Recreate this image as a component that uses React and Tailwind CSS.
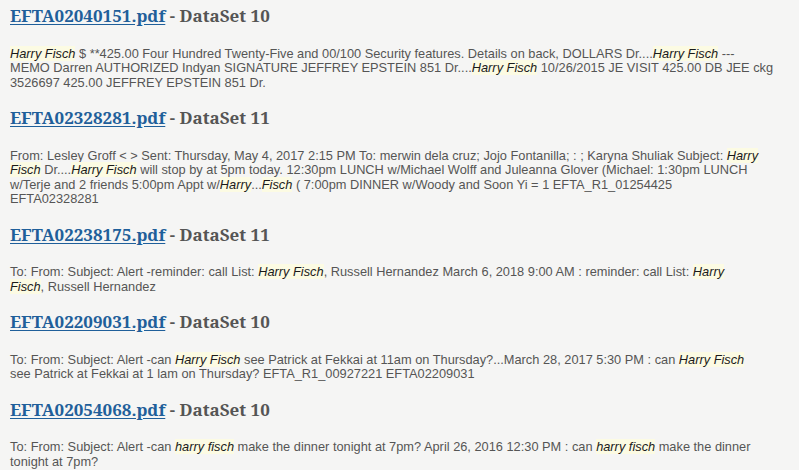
// each snippet is a list of lines; a line is a list of parts (string or { hl })
const results = [
  {
    file: "EFTA02040151.pdf",
    set: "DataSet 10",
    lines: [
      [
        { hl: "Harry Fisch" },
        " $ **425.00 Four Hundred Twenty-Five and 00/100 Security features. Details on back, DOLLARS Dr....",
        { hl: "Harry Fisch" },
        " ---",
      ],
      [
        "MEMO Darren AUTHORIZED Indyan SIGNATURE JEFFREY EPSTEIN 851 Dr....",
        { hl: "Harry Fisch" },
        " 10/26/2015 JE VISIT 425.00 DB JEE ckg",
      ],
      ["3526697 425.00 JEFFREY EPSTEIN 851 Dr."],
    ],
  },
  {
    file: "EFTA02328281.pdf",
    set: "DataSet 11",
    lines: [
      [
        "From: Lesley Groff < > Sent: Thursday, May 4, 2017 2:15 PM To: merwin dela cruz; Jojo Fontanilla; : ; Karyna Shuliak Subject: ",
        { hl: "Harry" },
      ],
      [
        { hl: "Fisch" },
        " Dr....",
        { hl: "Harry Fisch" },
        " will stop by at 5pm today. 12:30pm LUNCH w/Michael Wolff and Juleanna Glover (Michael: 1:30pm LUNCH",
      ],
      [
        "w/Terje and 2 friends 5:00pm Appt w/",
        { hl: "Harry" },
        "...",
        { hl: "Fisch" },
        " ( 7:00pm DINNER w/Woody and Soon Yi = 1 EFTA_R1_01254425",
      ],
      ["EFTA02328281"],
    ],
  },
  {
    file: "EFTA02238175.pdf",
    set: "DataSet 11",
    lines: [
      [
        "To: From: Subject: Alert -reminder: call List: ",
        { hl: "Harry Fisch" },
        ", Russell Hernandez March 6, 2018 9:00 AM : reminder: call List: ",
        { hl: "Harry" },
      ],
      [{ hl: "Fisch" }, ", Russell Hernandez"],
    ],
  },
  {
    file: "EFTA02209031.pdf",
    set: "DataSet 10",
    lines: [
      [
        "To: From: Subject: Alert -can ",
        { hl: "Harry Fisch" },
        " see Patrick at Fekkai at 11am on Thursday?...March 28, 2017 5:30 PM : can ",
        { hl: "Harry Fisch" },
      ],
      ["see Patrick at Fekkai at 1 lam on Thursday? EFTA_R1_00927221 EFTA02209031"],
    ],
  },
  {
    file: "EFTA02054068.pdf",
    set: "DataSet 10",
    lines: [
      [
        "To: From: Subject: Alert -can ",
        { hl: "harry fisch" },
        " make the dinner tonight at 7pm? April 26, 2016 12:30 PM : can ",
        { hl: "harry fisch" },
        " make the dinner",
      ],
      ["tonight at 7pm?"],
    ],
  },
];

function Snippet({ lines }) {
  return (
    <p className="font-['Liberation_Sans',sans-serif] text-[12.8px] leading-[14.5px] text-[#555555]">
      {lines.map((line, li) => (
        <span key={li} className="block whitespace-nowrap">
          {line.map((p, i) =>
            typeof p === "string" ? (
              <span key={i}>{p}</span>
            ) : (
              <mark key={i} className="bg-[#fcfbe3] italic text-[#1a1a1a]">
                {p.hl}
              </mark>
            )
          )}
        </span>
      ))}
    </p>
  );
}

export default function App() {
  return (
    <div className="min-h-screen bg-[#f5f5f4] px-[10px] pt-[2px]">
      <ul className="flex flex-col">
        {results.map((r) => (
          <li key={r.file} className="pb-[14px]">
            <h3 className="font-['Noto_Serif',serif] text-[17px] font-bold leading-7 text-[#555555]">
              <a href="#" className="text-[#1f5f9a] underline underline-offset-2">
                {r.file}
              </a>{" "}
              - {r.set}
            </h3>
            <div className="mt-[16.5px]">
              <Snippet lines={r.lines} />
            </div>
          </li>
        ))}
      </ul>
    </div>
  );
}
